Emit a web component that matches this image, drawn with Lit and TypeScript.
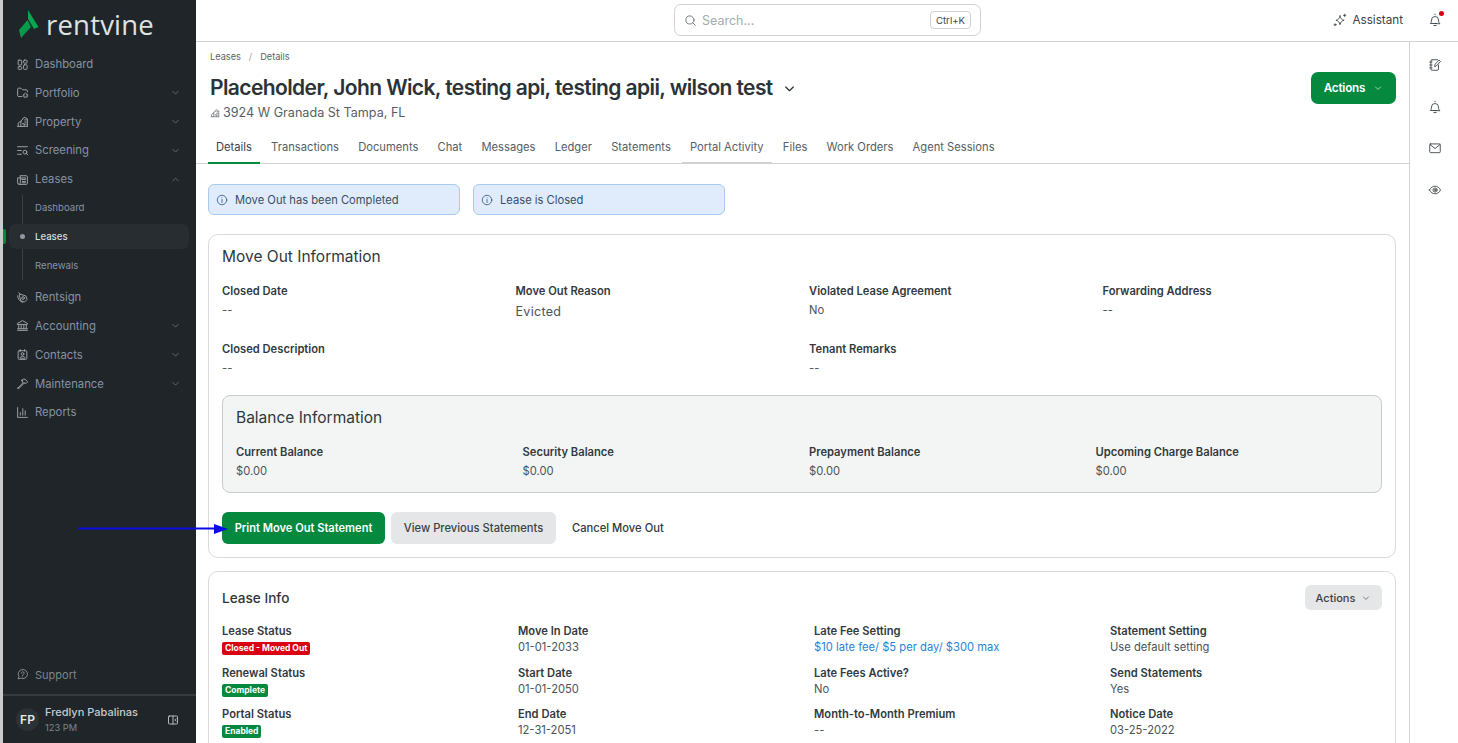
import { LitElement, html, css, svg } from "lit";
import { customElement } from "lit/decorators.js";

const icons: Record<string, any> = {
  dashboard: svg`<rect x="4" y="4" width="6.500" height="9" rx="1.500"/><rect x="14" y="4" width="6.500" height="5.500" rx="1.500"/><rect x="4" y="16" width="6.500" height="5" rx="1.500"/><rect x="14" y="12.500" width="6.500" height="8.500" rx="1.500"/>`,
  portfolio: svg`<path d="M11 19.500H5a2 2 0 0 1-2-2V6a2 2 0 0 1 2-2h4l3 3h7a2 2 0 0 1 2 2v2"/><path d="M13 17l4.500-4 4.500 4M14.500 16v4.500h6V16"/>`,
  property: svg`<path d="M3 21h18M9 21V11l-5 4v6M9 12l6-8 6 3v14M15 21v-5h-3M12 8h.01M16 9h3M16 13h3M16 17h3"/>`,
  screening: svg`<path d="M3 5h18M3 12h7M3 19h7"/><circle cx="16.500" cy="15" r="3.500"/><path d="M19 17.500l2.500 2.500"/>`,
  leases: svg`<path d="M8 5h11a2 2 0 0 1 2 2v12a2 2 0 0 1-2 2H6a3 3 0 0 1-3-3V9h5z"/><path d="M8 9v9a3 3 0 0 1-2 3M11.500 9h6v3h-6zM11.500 15.500h6M11.500 18h6"/>`,
  rentsign: svg`<path d="M5 3l3 3M8 6l10 3 2.500 6.500-5 5L9 18 6 8z"/><circle cx="13" cy="13" r="2.500"/><path d="M3 9c0 4 3 10 9 12"/>`,
  accounting: svg`<path d="M3 21h18M3 18h18M5 18v-7M9.500 18v-7M14.500 18v-7M19 18v-7M3 8l9-5 9 5v2H3z"/>`,
  contacts: svg`<rect x="4" y="5" width="16" height="16" rx="2"/><path d="M8 3v3M16 3v3"/><circle cx="12" cy="11" r="2.500"/><path d="M7.500 18c0-4 9-4 9 0z"/>`,
  maintenance: svg`<path d="M3.500 20.500L13 10.500l1.500 1.500-9.500 9.500a1.400 1.400 0 0 1-1.500-1zM10 6c3-3 6-3 9 0l2.500 3-3 3-2-1.500-2 1.500-3-3 1-1.500z"/>`,
  reports: svg`<path d="M3 3v18h18M8 17v-5M12.500 17V5M17 17V9"/>`,
  support: svg`<path d="M4 19.500l1.500-3.500A8.500 8.500 0 1 1 9 19z"/><path d="M10 9.500a2.500 2.500 0 1 1 3.500 2.300c-.9.400-1.500 1-1.500 2M12 16.500h.01"/>`,
  collapse: svg`<rect x="3" y="4" width="18" height="16" rx="1.500"/><path d="M12 4v16M18 9.500L15.500 12l2.500 2.500"/>`,
  chevron: svg`<path d="M6 9.500l6 6 6-6"/>`,
  chevronUp: svg`<path d="M6 15l6-6 6 6"/>`,
  search: svg`<circle cx="11" cy="11" r="7.500"/><path d="M16.500 16.500L21 21"/>`,
  sparkles: svg`<path d="M12 5c.9 4.500 2.800 6.500 7 7.500-4.200 1-6.100 3-7 7.500-.9-4.500-2.800-6.500-7-7.500 4.200-1 6.100-3 7-7.500z"/><path d="M20 2v4M18 4h4"/><circle cx="3.500" cy="20" r="1.500"/>`,
  bell: svg`<path d="M9.500 18H4c1.500-1.500 2-3 2-6a6 6 0 0 1 12 0c0 3 .5 4.500 2 6zM14.500 18H9.500"/><path d="M10 21.500h4M12 3V2"/>`,
  notebook: svg`<path d="M7 3h9.500M18 12v7a2 2 0 0 1-2 2H7a2 2 0 0 1-2-2V5a2 2 0 0 1 2-2"/><path d="M3 7h4M3 12h4M3 17h4"/><path d="M11.500 14l.7-3.300L19 3.500l2.500 2.500-7 7.300z"/>`,
  mail: svg`<rect x="3" y="5" width="18" height="15" rx="1.500"/><path d="M3.500 6l8.500 7 8.500-7"/>`,
  eye: svg`<path d="M2.500 12c2.500-4.500 5.500-6.500 9.500-6.500s7 2 9.500 6.500c-2.500 4.500-5.500 6.500-9.500 6.500S5 16.500 2.500 12z"/><circle cx="12" cy="12" r="3.500"/><circle cx="12" cy="12" r="1"/>`,
  info: svg`<circle cx="12" cy="12" r="9.500"/><path d="M12 11v6M12 7.500h.01"/>`,
};

const icon = (n: string, cls = "") =>
  html`<svg class="ic ${cls}" viewBox="0 0 24 24" aria-hidden="true">${icons[n]}</svg>`;

type Nav = { label: string; icon: string; chev?: string; cls?: string };
const nav1: Nav[] = [
  { label: "Dashboard", icon: "dashboard" },
  { label: "Portfolio", icon: "portfolio", chev: "chevron" },
  { label: "Property", icon: "property", chev: "chevron" },
  { label: "Screening", icon: "screening", chev: "chevron" },
  { label: "Leases", icon: "leases", chev: "chevronUp" },
];
const nav2: Nav[] = [
  { label: "Rentsign", icon: "rentsign" },
  { label: "Accounting", icon: "accounting", chev: "chevron" },
  { label: "Contacts", icon: "contacts", chev: "chevron" },
  { label: "Maintenance", icon: "maintenance", chev: "chevron" },
  { label: "Reports", icon: "reports" },
];
const tabs = ["Details", "Transactions", "Documents", "Chat", "Messages", "Ledger", "Statements", "Portal Activity", "Files", "Work Orders", "Agent Sessions"];

type Cell = { l: string; v?: string; badge?: string; link?: boolean };
const info: Cell[] = [
  { l: "Lease Status", badge: "Closed - Moved Out" },
  { l: "Move In Date", v: "01-01-2033" },
  { l: "Late Fee Setting", v: "$10 late fee/ $5 per day/ $300 max", link: true },
  { l: "Statement Setting", v: "Use default setting" },
  { l: "Renewal Status", badge: "Complete" },
  { l: "Start Date", v: "01-01-2050" },
  { l: "Late Fees Active?", v: "No" },
  { l: "Send Statements", v: "Yes" },
  { l: "Portal Status", badge: "Enabled" },
  { l: "End Date", v: "12-31-2051" },
  { l: "Month-to-Month Premium", v: "--" },
  { l: "Notice Date", v: "03-25-2022" },
];

@customElement("app-root")
export class AppRoot extends LitElement {
  static styles = css`
    :host { display: block; width: 1458px; height: 743px; overflow: hidden; position: relative; background: #fff; font-family: Inter, "Liberation Sans", sans-serif; color: #2c3338; font-size: 11px; }
    * { box-sizing: border-box; }
    .ic { width: 16px; height: 16px; fill: none; stroke: currentColor; stroke-width: 1.500; stroke-linecap: round; stroke-linejoin: round; flex: none; display: block; }
    .page { display: flex; height: 743px; }
    .edge { width: 3px; background: #c9cbcc; flex: none; }
    aside { width: 193px; flex: none; background: #1f2528; color: #8e99a8; display: flex; flex-direction: column; }
    .logo { display: flex; align-items: center; gap: 6px; height: 46px; padding: 0 0 0 16px; margin-bottom: 3.700px; }
    .logo svg { width: 21px; height: 28px; flex: none; margin-top: 2px; }
    .logo span { font-family: "Open Sans", Inter, sans-serif; font-size: 27.500px; color: #dfe2e4; letter-spacing: .2px; line-height: 1; margin-top: 4px; font-weight: 400; }
    .nav { display: flex; flex-direction: column; }
    .item { height: 28.800px; display: flex; align-items: center; padding: 0 15px 0 13px; gap: 6px; font-size: 11.300px; color: #8593a5; }
    .item .ic { color: #a3abb2; width: 13px; height: 13px; stroke-width: 1.700; }
    .item .lbl { flex: 1; }
    .item .chev { width: 11px; height: 11px; color: #7d858c; stroke-width: 1.500; }
    .sub { position: relative; display: flex; flex-direction: column; height: 87px; margin: -.9px 0 3px; }
    .sub .rail { position: absolute; left: 19px; top: 2px; bottom: 0; width: 1px; background: #3a4145; }
    .sub a { height: 29px; flex: none; display: flex; align-items: center; font-size: 9.600px; padding-left: 32px; color: #8593a5; }
    .sub a.on { height: 25px; color: #d8dde2; background: #272d31; border-radius: 7px; margin: 2px 7px 2px 6px; padding-left: 26px; position: relative; font-weight: 500; }
    .sub a.on::before { content: ""; position: absolute; left: -6px; top: 5px; width: 3px; height: 15px; background: #04893f; border-radius: 0 2px 2px 0; }
    .sub a.on::after { content: ""; position: absolute; left: 11px; top: 10px; width: 5px; height: 5px; border-radius: 50%; background: #8e99a3; }
    .spacer { flex: 1; }
    .support { height: 29px; display: flex; align-items: center; gap: 6px; padding-left: 13px; color: #7d868d; font-size: 11px; margin-bottom: 5px; }
    .support .ic { width: 13px; height: 13px; color: #8b9399; stroke-width: 1.700; }
    .user { height: 49px; border-top: 2px solid #353b3f; display: flex; align-items: center; padding: 0 17px 0 13px; gap: 5px; }
    .avatar { width: 23px; height: 23px; border-radius: 50%; background: #2a3235; color: #e6e8ea; font-size: 12px; font-weight: 600; display: flex; align-items: center; justify-content: center; flex: none; margin-right: 1px; }
    .who { flex: 1; line-height: 1.200; }
    .who b { display: block; font-weight: 500; color: #c5cad0; font-size: 11px; }
    .who small { display: block; font-size: 9.300px; color: #7d868d; margin-top: 2px; }
    .user .ic { width: 12px; height: 12px; color: #c3c7ca; stroke-width: 1.800; }
    .right { flex: 1; display: flex; flex-direction: column; min-width: 0; }
    .top { height: 42px; flex: none; border-bottom: 1px solid #d2d3d4; display: flex; align-items: center; position: relative; padding: 0 16px 1px 0; justify-content: flex-end; }
    .searchwrap { flex: 1; display: flex; padding-left: 478px; }
    .search { width: 307px; height: 32px; border: 1px solid #cfd3d6; border-radius: 7px; display: flex; align-items: center; padding: 0 9px 0 9px; gap: 5px; color: #a4abb1; font-size: 12.500px; }
    .search .ic { width: 13px; height: 13px; color: #596168; }
    .search span { flex: 1; }
    .search kbd { font-family: inherit; font-size: 9.600px; color: #3d454b; border: 1px solid #cfd3d6; border-radius: 4px; height: 18px; padding: 0 5px; display: flex; align-items: center; }
    .assist { display: flex; align-items: center; gap: 5px; font-size: 11.700px; color: #3a4248; margin-right: 25px; }
    .assist .ic { width: 14px; height: 14px; }
    .bell { position: relative; width: 14px; height: 14px; color: #3a4248; }
    .bell .ic { width: 14px; height: 14px; }
    .dot { position: absolute; right: -2px; top: -2px; width: 5px; height: 5px; background: #d40011; border-radius: 50%; }
    .below { flex: 1; display: flex; min-height: 0; }
    main { flex: 1; min-width: 0; overflow: hidden; }
    .rail2 { width: 49px; flex: none; border-left: 1px solid #d2d3d4; display: flex; flex-direction: column; align-items: center; padding: 16px 0 0 2px; gap: 27.500px; color: #3a4248; }
    .rail2 .ic { width: 14px; height: 14px; }
    .head { padding: 9px 13px 0 14px; position: relative; display: flex; justify-content: space-between; align-items: flex-start; }
    .crumb { font-size: 9.200px; color: #5c6369; display: flex; gap: 8px; line-height: 12px; }
    .crumb i { font-style: normal; color: #9aa0a5; }
    h1 { margin: 10px 0 0; font-size: 21px; font-weight: 600; letter-spacing: -.6px; line-height: 30px; color: #2c3338; display: flex; align-items: center; gap: 9px; }
    h1 .ic { width: 15px; height: 15px; stroke-width: 2; }
    .addr { display: flex; align-items: center; gap: 3px; font-size: 12.600px; color: #565e64; margin-top: 1px; line-height: 18px; }
    .addr .ic { width: 10px; height: 10px; }
    .btn { border: none; border-radius: 6px; font: inherit; font-weight: 500; display: flex; align-items: center; justify-content: center; }
    .green { background: #04893f; color: #fff; }
    .hactions { width: 85px; height: 32px; font-size: 11.700px; gap: 8px; font-weight: 600; margin-top: 21px; border-radius: 7px; letter-spacing: -.2px; }
    .hactions .ic { width: 10px; height: 10px; }
    .tabs { display: flex; padding: 0 0 0 12px; margin-top: 7px; border-bottom: 1px solid #d2d3d4; height: 35px; }
    .tab { padding: 0 8px; margin-right: 3.200px; font-size: 11.200px; color: #565e64; height: 35px; display: flex; align-items: center; }
    .tab.on { color: #3a4248; border-bottom: 2px solid #04893f; padding-top: 2px; }
    .tab.hov { border-bottom: 2px solid #cfd0d1; padding-top: 2px; }
    .body { padding: 20px 13px 0 12px; display: flex; flex-direction: column; }
    .alerts { display: flex; gap: 13px; margin-bottom: 19px; }
    .alert { width: 252px; height: 31px; background: #e0ecfb; border: 1px solid #a9cbf0; border-radius: 6px; display: flex; align-items: center; padding-left: 7px; gap: 7px; font-size: 11.200px; color: #3b4d63; }
    .alert .ic { width: 12px; height: 12px; color: #254a72; }
    .card { border: 1px solid #d8dadb; border-radius: 10px; padding: 13px 13px 13px; margin-bottom: 13px; }
    h2 { margin: 0; font-size: 15.500px; font-weight: 400; color: #2f373c; line-height: 18px; }
    .g4 { display: grid; grid-template-columns: repeat(4, 293.500px); margin-top: 18px; row-gap: 23px; }
    .lab { font-size: 11.200px; font-weight: 600; color: #32393f; line-height: 14px; }
    .val { font-size: 11.200px; color: #4a5359; line-height: 14px; margin-top: 5px; }
    .val.big { font-size: 12.500px; margin-top: 7px; letter-spacing: .3px; }
    .bal { margin-top: 20px; background: #f3f5f4; border: 1px solid #c9cccd; border-radius: 8px; padding: 13px 13px 14px; height: 98px; }
    .bal .g { display: grid; grid-template-columns: repeat(4, 286.500px); margin-top: 18px; }
    .acts { display: flex; gap: 6px; margin-top: 19px; align-items: center; height: 32px; }
    .b1 { width: 163px; height: 32px; font-size: 11.100px; font-weight: 600; }
    .b2 { width: 165px; height: 32px; font-size: 11.200px; background: #e4e6e7; color: #3a4248; }
    .b3 { font-size: 11.200px; color: #32393f; margin-left: 10px; font-weight: 500; }
    .card2 { padding: 13px 13px 40px; }
    .ch { display: flex; justify-content: space-between; align-items: center; height: 25px; }
    .ch h3 { margin: 0; font-size: 13.600px; font-weight: 500; color: #2f373c; }
    .sm { width: 77px; height: 25px; background: #e4e6e7; color: #3a4248; font-size: 11px; gap: 6px; border-radius: 6px; }
    .sm .ic { width: 10px; height: 10px; }
    .g4b { display: grid; grid-template-columns: repeat(4, 296px); margin-top: 14px; row-gap: 10.500px; }
    .g4b .val { margin-top: 2px; }
    .g4b .link { color: #2a7fd6; }
    .badge { display: inline-block; margin-top: 4px; height: 13px; line-height: 13px; padding: 0 3px; border-radius: 2px; font-size: 8.500px; font-weight: 700; color: #fff; background: #04893f; vertical-align: top; }
    .badge.red { background: #d90012; }
    .arrow { position: absolute; left: 78px; top: 523px; width: 150px; height: 12px; }
  `;

  private cell(l: string, v: string, big = false) {
    return html`<div><div class="lab">${l}</div><div class="val ${big ? "big" : ""}">${v}</div></div>`;
  }

  private navItem(n: Nav) {
    return html`<div class="item">${icon(n.icon)}<span class="lbl">${n.label}</span>${n.chev ? icon(n.chev, "chev") : ""}</div>`;
  }

  render() {
    return html`
      <div class="page">
        <div class="edge"></div>
        <aside>
          <div class="logo">
            <svg viewBox="0 0 21 28"><path fill="#0aa550" d="M9 0L19.500 17 15 19 9 9z"/><path fill="#089a4a" d="M0 20L8.500 10 12 17 2 28z"/></svg>
            <span>rentvine</span>
          </div>
          <div class="nav">
            ${nav1.map((n) => this.navItem(n))}
            <div class="sub">
              <div class="rail"></div>
              <a>Dashboard</a>
              <a class="on">Leases</a>
              <a>Renewals</a>
            </div>
            ${nav2.map((n) => this.navItem(n))}
          </div>
          <div class="spacer"></div>
          <div class="support">${icon("support")}<span>Support</span></div>
          <div class="user">
            <div class="avatar">FP</div>
            <div class="who"><b>Fredlyn Pabalinas</b><small>123 PM</small></div>
            ${icon("collapse")}
          </div>
        </aside>
        <div class="right">
          <div class="top">
            <div class="searchwrap">
              <div class="search">${icon("search")}<span>Search...</span><kbd>Ctrl+K</kbd></div>
            </div>
            <div class="assist">${icon("sparkles")}<span>Assistant</span></div>
            <div class="bell">${icon("bell")}<div class="dot"></div></div>
          </div>
          <div class="below">
            <main>
              <div class="head">
                <div>
                  <div class="crumb"><span>Leases</span><i>/</i><span>Details</span></div>
                  <h1>Placeholder, John Wick, testing api, testing apii, wilson test ${icon("chevron")}</h1>
                  <div class="addr">${icon("property")}<span>3924 W Granada St Tampa, FL</span></div>
                </div>
                <button class="btn green hactions">Actions ${icon("chevron")}</button>
              </div>
              <div class="tabs">
                ${tabs.map((t, i) => html`<div class="tab ${i === 0 ? "on" : ""} ${t === "Portal Activity" ? "hov" : ""}">${t}</div>`)}
              </div>
              <div class="body">
                <div class="alerts">
                  <div class="alert">${icon("info")}<span>Move Out has been Completed</span></div>
                  <div class="alert">${icon("info")}<span>Lease is Closed</span></div>
                </div>
                <section class="card">
                  <h2>Move Out Information</h2>
                  <div class="g4">
                    ${this.cell("Closed Date", "--")}
                    ${this.cell("Move Out Reason", "Evicted", true)}
                    ${this.cell("Violated Lease Agreement", "No")}
                    ${this.cell("Forwarding Address", "--")}
                    <div class="wide">${this.cell("Closed Description", "--")}</div>
                    <div></div>
                    <div class="wide">${this.cell("Tenant Remarks", "--")}</div>
                  </div>
                  <div class="bal">
                    <h2>Balance Information</h2>
                    <div class="g">
                      ${this.cell("Current Balance", "$0.00")}
                      ${this.cell("Security Balance", "$0.00")}
                      ${this.cell("Prepayment Balance", "$0.00")}
                      ${this.cell("Upcoming Charge Balance", "$0.00")}
                    </div>
                  </div>
                  <div class="acts">
                    <button class="btn green b1">Print Move Out Statement</button>
                    <button class="btn b2">View Previous Statements</button>
                    <span class="b3">Cancel Move Out</span>
                  </div>
                </section>
                <section class="card card2">
                  <div class="ch"><h3>Lease Info</h3><button class="btn sm">Actions ${icon("chevron")}</button></div>
                  <div class="g4b">
                    ${info.map((c) => html`<div>
                      <div class="lab">${c.l}</div>
                      ${c.badge
                        ? html`<span class="badge ${c.badge.startsWith("Closed") ? "red" : ""}">${c.badge}</span>`
                        : html`<div class="val ${c.link ? "link" : ""}">${c.v}</div>`}
                    </div>`)}
                  </div>
                </section>
              </div>
            </main>
            <div class="rail2">
              ${icon("notebook")}${icon("bell")}${icon("mail")}${icon("eye")}
            </div>
          </div>
        </div>
      </div>
      <svg class="arrow" viewBox="0 0 150 12" aria-hidden="true">
        <path d="M0 5.500H139" stroke="#0a0ae6" stroke-width="2" fill="none"/>
        <path d="M136 1l14 5-14 5z" fill="#0a0ae6"/>
      </svg>
    `;
  }
}
